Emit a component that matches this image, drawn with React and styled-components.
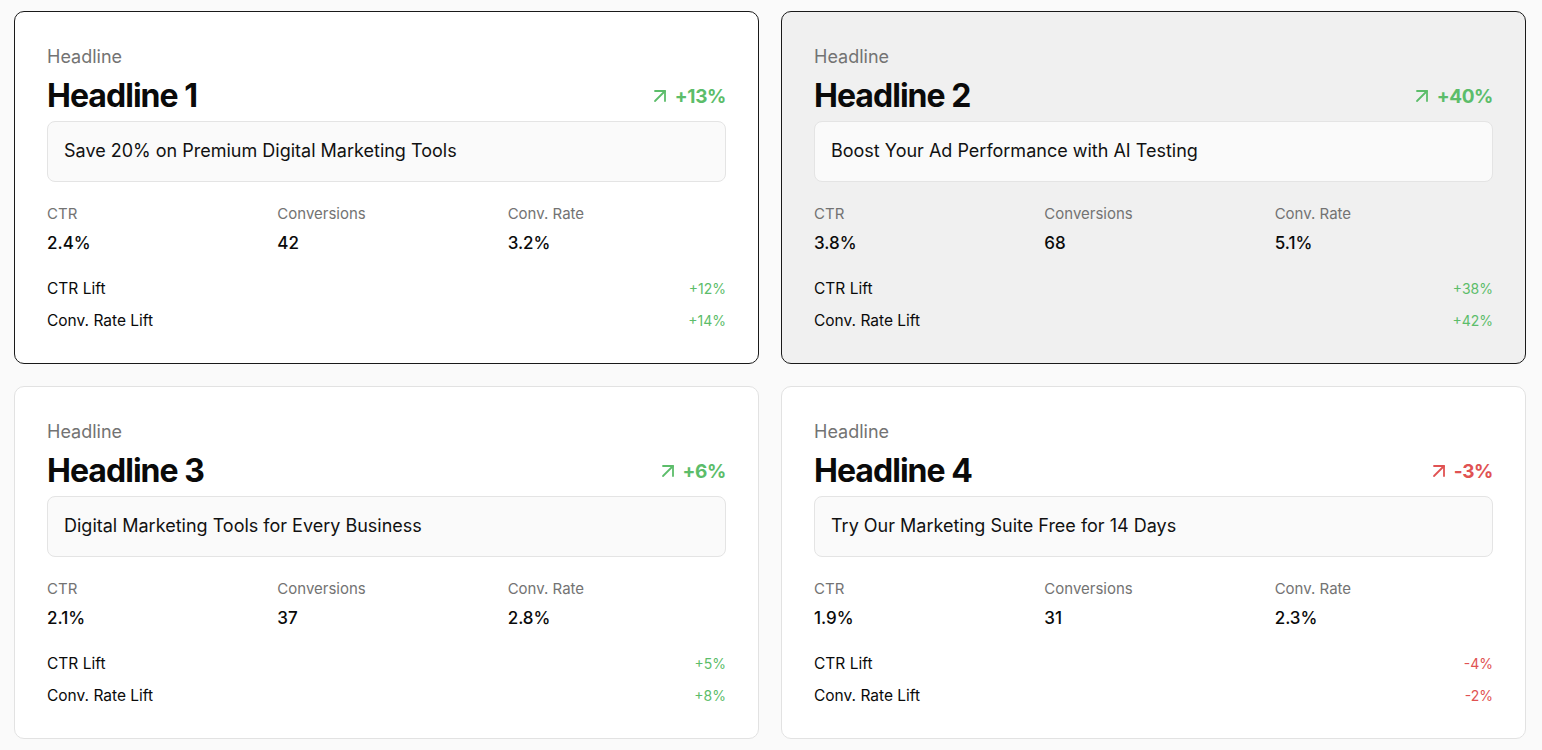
import React from "react";
import styled, { createGlobalStyle } from "styled-components";
import { ArrowUpRight } from "lucide-react";

const GlobalStyle = createGlobalStyle`
  * { box-sizing: border-box; }
  body {
    margin: 0;
    background: #fafafa;
    font-family: Inter, "Noto Sans", sans-serif;
    color: #0a0a0a;
  }
`;

const headlines = [
  {
    id: 1,
    text: "Save 20% on Premium Digital Marketing Tools",
    lift: "+13%",
    ctr: "2.4%",
    conversions: "42",
    convRate: "3.2%",
    ctrLift: "+12%",
    convLift: "+14%",
    state: "winner",
  },
  {
    id: 2,
    text: "Boost Your Ad Performance with AI Testing",
    lift: "+40%",
    ctr: "3.8%",
    conversions: "68",
    convRate: "5.1%",
    ctrLift: "+38%",
    convLift: "+42%",
    state: "selected",
  },
  {
    id: 3,
    text: "Digital Marketing Tools for Every Business",
    lift: "+6%",
    ctr: "2.1%",
    conversions: "37",
    convRate: "2.8%",
    ctrLift: "+5%",
    convLift: "+8%",
  },
  {
    id: 4,
    text: "Try Our Marketing Suite Free for 14 Days",
    lift: "-3%",
    ctr: "1.9%",
    conversions: "31",
    convRate: "2.3%",
    ctrLift: "-4%",
    convLift: "-2%",
  },
];

export default function App() {
  return (
    <>
      <GlobalStyle />
      <Grid>
        {headlines.map((h) => {
          const negative = h.lift.startsWith("-");
          return (
            <Card key={h.id} $state={h.state}>
              <Eyebrow>Headline</Eyebrow>
              <TitleRow>
                <Title>Headline {h.id}</Title>
                <Lift $negative={negative}>
                  <ArrowUpRight size={24} strokeWidth={1.8} />
                  {h.lift}
                </Lift>
              </TitleRow>
              <CopyBox>{h.text}</CopyBox>
              <Metrics>
                <Metric>
                  <MetricLabel>CTR</MetricLabel>
                  <MetricValue>{h.ctr}</MetricValue>
                </Metric>
                <Metric>
                  <MetricLabel>Conversions</MetricLabel>
                  <MetricValue>{h.conversions}</MetricValue>
                </Metric>
                <Metric>
                  <MetricLabel>Conv. Rate</MetricLabel>
                  <MetricValue>{h.convRate}</MetricValue>
                </Metric>
              </Metrics>
              <LiftList>
                <LiftRow>
                  <span>CTR Lift</span>
                  <LiftValue $negative={h.ctrLift.startsWith("-")}>{h.ctrLift}</LiftValue>
                </LiftRow>
                <LiftRow>
                  <span>Conv. Rate Lift</span>
                  <LiftValue $negative={h.convLift.startsWith("-")}>{h.convLift}</LiftValue>
                </LiftRow>
              </LiftList>
            </Card>
          );
        })}
      </Grid>
    </>
  );
}

const Grid = styled.div`
  display: grid;
  grid-template-columns: 1fr 1fr;
  gap: 22px 22px;
  padding: 11px 16px 11px 14px;
`;

const Card = styled.div`
  border: 1px solid ${(p) => (p.$state ? "#1a1a1a" : "#e2e2e2")};
  background: ${(p) => (p.$state === "selected" ? "#f0f0f0" : "#ffffff")};
  border-radius: 10px;
  padding: 33px 32px 31px;
  display: flex;
  flex-direction: column;
`;

const Eyebrow = styled.div`
  font-size: 18px;
  line-height: 24px;
  color: #737373;
`;

const TitleRow = styled.div`
  display: flex;
  align-items: center;
  justify-content: space-between;
  margin-top: 7px;
`;

const Title = styled.h2`
  margin: 0;
  font-size: 32px;
  line-height: 40px;
  font-weight: 700;
  letter-spacing: -0.03em;
`;

const Lift = styled.div`
  display: flex;
  align-items: center;
  gap: 3px;
  font-size: 19px;
  font-weight: 700;
  letter-spacing: -0.02em;
  color: ${(p) => (p.$negative ? "#e05252" : "#5cbd6a")};
`;

const CopyBox = styled.div`
  margin-top: 5px;
  height: 61px;
  display: flex;
  align-items: center;
  padding: 0 16px 2px;
  border: 1px solid #e4e4e4;
  border-radius: 8px;
  background: #fafafa;
  font-size: 18px;
  color: #111;
`;

const Metrics = styled.div`
  display: grid;
  grid-template-columns: repeat(3, 1fr);
  gap: 12px;
  margin-top: 21px;
`;

const Metric = styled.div`
  display: flex;
  flex-direction: column;
  gap: 6px;
`;

const MetricLabel = styled.div`
  font-size: 15px;
  line-height: 22px;
  color: #737373;
`;

const MetricValue = styled.div`
  font-size: 17px;
  line-height: 24px;
  font-weight: 500;
`;

const LiftList = styled.div`
  display: flex;
  flex-direction: column;
  gap: 10px;
  margin-top: 23px;
`;

const LiftRow = styled.div`
  display: flex;
  justify-content: space-between;
  align-items: center;
  font-size: 15.5px;
  line-height: 22px;
`;

const LiftValue = styled.span`
  font-size: 14px;
  color: ${(p) => (p.$negative ? "#e05252" : "#5cbd6a")};
`;
